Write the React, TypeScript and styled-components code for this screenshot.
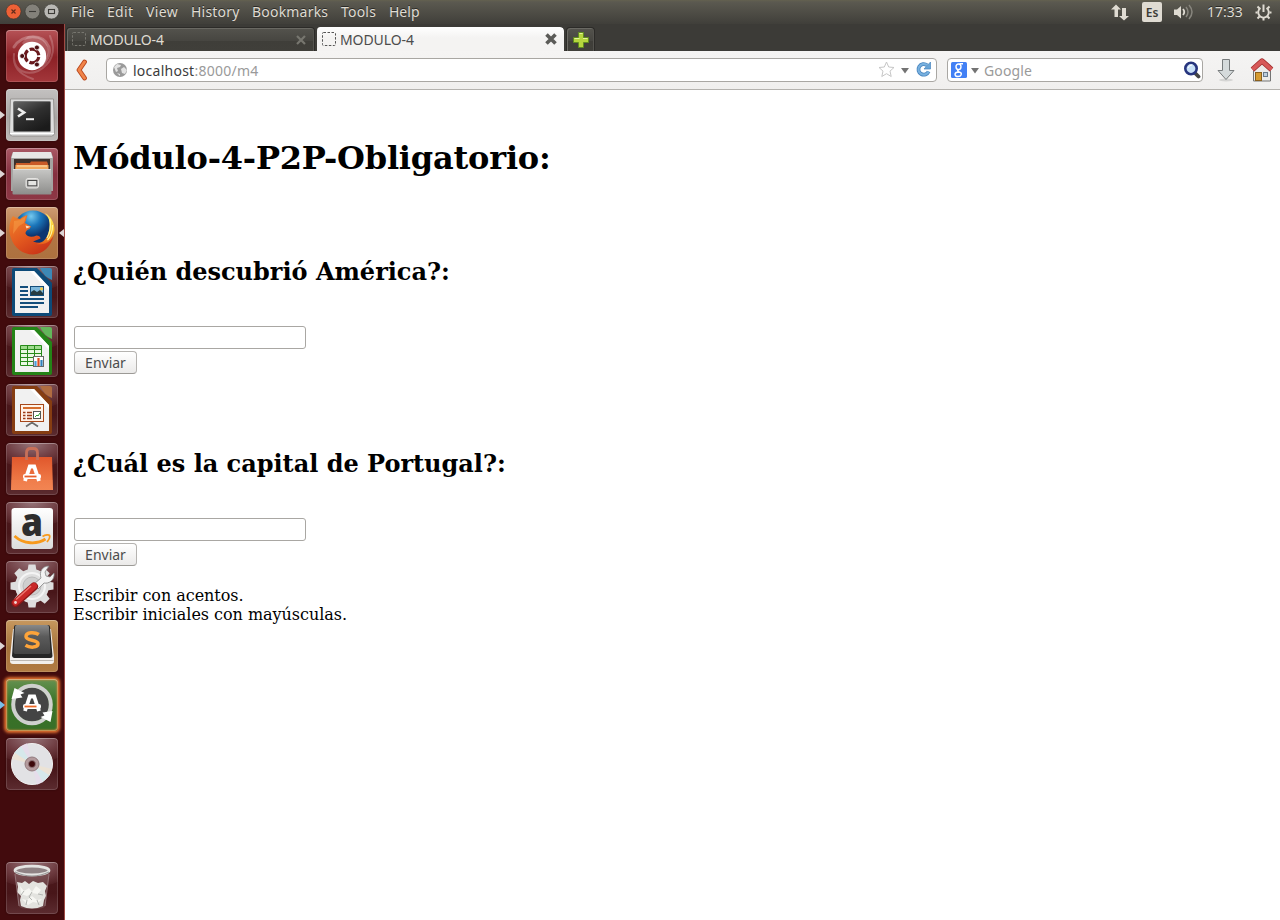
import React from 'react';
import styled, { createGlobalStyle } from 'styled-components';

const UI = '"Noto Sans", "Open Sans", sans-serif';

const Global = createGlobalStyle`
  * { box-sizing: border-box; }
  body { margin: 0; background: #fff; overflow: hidden; }
`;

const Desktop = styled.div`
  width: 1280px;
  height: 920px;
  display: flex;
  flex-direction: column;
  overflow: hidden;
`;

/* ---------- top panel ---------- */
const Panel = styled.header`
  height: 24px;
  flex: none;
  display: flex;
  align-items: center;
  justify-content: space-between;
  padding: 0 8px 0 5px;
  background: linear-gradient(#64614f 0, #5b5950 2px, #403f3a 100%);
  color: #dfdbd2;
  font: 14px/24px ${UI};
  text-shadow: 0 -1px 0 #2b2a27;
`;
const Group = styled.div`
  display: flex;
  align-items: center;
`;
const MenuItem = styled.span<{ $w: number; $ls?: number }>`
  width: ${p => p.$w}px;
  white-space: nowrap;
  letter-spacing: ${p => p.$ls ?? 0}px;
`;
const WindowButtons = styled.svg`
  width: 56px;
  height: 18px;
  margin-right: 10px;
`;
const Language = styled.span`
  width: 20px;
  height: 20px;
  margin: 0 12px 0 13px;
  border-radius: 2px;
  background: #dfdbd2;
  color: #3c3b37;
  font: 600 12px/21px ${UI};
  text-align: center;
  text-shadow: none;
`;
const Clock = styled.span`
  width: 37px;
  margin: 0 11px 0 12px;
`;

const Main = styled.div`
  flex: 1;
  display: flex;
  min-height: 0;
`;

/* ---------- launcher ---------- */
const Launcher = styled.nav`
  width: 65px;
  flex: none;
  display: flex;
  flex-direction: column;
  gap: 7px;
  padding: 6px 0 6px 6px;
  background: linear-gradient(#33090a 0, #420b0d 12px, #420b0d 100%);
  border-right: 1px solid #a04a44;
`;
const Tile = styled.div<{ $bg: string; $glow?: boolean }>`
  position: relative;
  width: 52px;
  height: 52px;
  flex: none;
  border-radius: 4px;
  background: ${p => p.$bg};
  box-shadow: inset 0 0 0 1px rgba(255, 255, 255, 0.14), inset 0 1px 0 rgba(255, 255, 255, 0.22),
    ${p => (p.$glow ? '0 0 3px 1.5px #e0702f, inset 0 0 2px 1px #e58a3c' : '0 0 2px rgba(0,0,0,0.4)')};
  &:last-child { margin-top: auto; }
`;
const Art = styled.svg`
  display: block;
  width: 52px;
  height: 52px;
  overflow: visible;
`;
const Pip = styled.i<{ $right?: boolean; $color?: string }>`
  position: absolute;
  top: 21.5px;
  ${p => (p.$right ? 'right: -6px;' : 'left: -6px;')}
  border: solid transparent;
  border-width: 4px 0;
  ${p => (p.$right ? 'border-right' : 'border-left')}: 5px solid ${p => p.$color ?? '#ddd5d5'};
`;

/* ---------- browser ---------- */
const Browser = styled.section`
  flex: 1;
  display: flex;
  flex-direction: column;
  min-width: 0;
`;
const TabStrip = styled.div`
  height: 27px;
  flex: none;
  display: flex;
  align-items: flex-end;
  gap: 1px;
  padding: 0 1px;
  background: #3c3b37;
`;
const Tab = styled.div<{ $active?: boolean }>`
  width: ${p => (p.$active ? 248 : 249)}px;
  height: 24px;
  display: flex;
  align-items: center;
  padding: 0 6px 0 5px;
  border-radius: 4px 4px 0 0;
  background: ${p => (p.$active ? 'linear-gradient(#fff, #f4f3f2 45%)' : 'linear-gradient(#54534d, #474641 55%, #3f3e39 56%, #403f3a)')};
  border: 1px solid ${p => (p.$active ? 'transparent' : '#2c2b28')};
  border-width: ${p => (p.$active ? '0 0 0 1px' : '1px 1px 0')};
  background-clip: ${p => (p.$active ? 'padding-box' : 'border-box')};
  box-shadow: ${p => (p.$active ? 'none' : 'inset 1px 1px 0 #6a6963, inset -1px 0 0 #55544f')};
  color: ${p => (p.$active ? '#4c4c4c' : '#dfdbd2')};
  font: 14px/24px ${UI};
`;
const TabLabel = styled.span`
  flex: 1;
  margin-left: 3px;
  padding-top: 1px;
  letter-spacing: -0.1px;
`;
const NewTab = styled(Tab)`
  width: 29px;
  margin-left: 1px;
  padding: 0;
  justify-content: center;
`;
const NavBar = styled.div`
  height: 39px;
  flex: none;
  display: flex;
  align-items: center;
  padding: 0 6px 1px 10px;
  background: linear-gradient(#f5f4f3, #f0efee);
  border-bottom: 1px solid #b4b2ae;
`;
const Field = styled.div<{ $w: number; $ml: number }>`
  width: ${p => p.$w}px;
  height: 24px;
  margin-left: ${p => p.$ml}px;
  display: flex;
  align-items: center;
  padding: 0 4px 0 5px;
  border: 1px solid #a9a7a3;
  border-radius: 4px;
  background: #fff;
  color: #9a9a9a;
  font: 14px/22px ${UI};
`;
const SearchField = styled(Field)`
  padding: 0 1px 0 3px;
`;
const FieldText = styled.span<{ $ls: number }>`
  flex: 1;
  margin-left: 5px;
  padding-top: 2px;
  letter-spacing: ${p => p.$ls}px;
  b { font-weight: 400; color: #3c3c3c; }
`;
const Icon = styled.svg<{ $ml?: number }>`
  flex: none;
  margin-left: ${p => p.$ml ?? 0}px;
`;

/* ---------- page ---------- */
const Page = styled.main`
  flex: 1;
  padding: 50px 8px 0;
  background: #fff;
  color: #000;
  font: 16px/19px "DejaVu Serif", serif;
`;
const Title = styled.h1`
  margin: 0 0 81px;
  font-size: 32px;
  line-height: 37px;
  letter-spacing: -0.2px;
`;
const Question = styled.form`
  height: 192px;
  display: flex;
  flex-direction: column;
  align-items: flex-start;
  padding-left: 1px;
`;
const Prompt = styled.h2`
  margin: 0 0 40px -1px;
  font-size: 24px;
  line-height: 28px;
  letter-spacing: -0.015px;
`;
const Answer = styled.input`
  width: 232px;
  height: 23px;
  margin: 0 0 2px;
  border: 1px solid #a9a7a3;
  border-radius: 3px;
  background: #fff;
  outline: none;
`;
const Send = styled.button`
  width: 63px;
  height: 23px;
  padding: 0;
  border: 1px solid #b5b3b0;
  border-bottom-color: #9c9a96;
  border-radius: 4px;
  background: linear-gradient(#fff, #ebeae9);
  color: #4c4c4c;
  font: 14px/20px ${UI};
`;
const Notes = styled.p`
  margin: -56px 0 0;
  letter-spacing: -0.035px;
`;

const DocPage = ({ dark, light, children }: { dark: string; light: string; children: React.ReactNode }) => (
  <Art viewBox="0 0 52 52">
    <path d="M8 2h23l15 15v31q0 2-2 2H8q-2 0-2-2V4q0-2 2-2z" fill={dark} />
    <path d="M34 2h10q2 0 2 2v10q-8-3-12-12z" fill={light} />
    <path d="M9 5h19l15 16v26H9z" fill="#f1f1f1" />
    <path d="M28 5l15 16v4L24 5z" fill="#fff" />
    {children}
  </Art>
);

const glass = 'radial-gradient(ellipse 44px 25px at 50% 0, #97757a 0, #6f3d42 60%, rgba(90, 40, 44, 0.5) 98%, transparent 100%), linear-gradient(#4d1a1e, #481619 60%, #5c2c30)';

const LetterA = ({ bar }: { bar: string }) => (
  <g>
    <path d="M19 38l4.800-14.500h4.400L33 38" fill="none" stroke="#fff" strokeWidth="3.800" />
    <rect x="17" y="31" width="18" height="5" rx="2" fill="#fff" />
    <path d="M18.500 33.500h12" stroke={bar} strokeWidth="1.800" />
  </g>
);

const gearTeeth = [0, 45, 90, 135, 180, 225, 270, 315];

const Dock = () => (
  <Launcher>
    <Tile $bg="linear-gradient(#b65357, #8c2025 52%, #a3373b)">
      <Art viewBox="0 0 52 52">
        <g fill="none" stroke="#fff" strokeLinecap="round">
          <path d="M8 17C16 4 37 3 43 17c2 8-3 15-7 18" opacity=".25" strokeWidth="3" />
          <path d="M8 24c-2 14 7 21 19 25M44 6c7 16 1 28-12 35-12 5-23-1-24-12" opacity=".2" strokeWidth="2" />
        </g>
        <path d="M22 6c17-3 28 14 14 31L16 13z" fill="#fff" opacity=".18" />
        <circle cx="26" cy="26" r="14.200" fill="#fff" />
        <circle cx="26" cy="26" r="6.800" fill="none" stroke="#6a191d" strokeWidth="3.200" strokeDasharray="12.200 2.040" strokeDashoffset="-1" />
        <g fill="#4c1013" stroke="#fff" strokeWidth=".8">
          <circle cx="16.200" cy="26" r="2.500" /><circle cx="30.900" cy="17.500" r="2.500" /><circle cx="30.900" cy="34.500" r="2.500" />
        </g>
      </Art>
    </Tile>
    <Tile $bg="linear-gradient(#c3c1c0, #a9a6a4 55%, #bcb9b7)">
      <Pip />
      <Art viewBox="0 0 52 52">
        <defs><linearGradient id="screen" x2=".6" y2="1"><stop stopColor="#666" /><stop offset=".5" stopColor="#303030" /><stop offset="1" stopColor="#1b1b1b" /></linearGradient></defs>
        <path d="M4.500 10h43l1 34q0 3-3 3h-39q-3 0-3-3z" fill="#dedede" stroke="#8b8987" strokeWidth=".8" />
        <path d="M4 44.500h44" stroke="#fff" />
        <rect x="7.500" y="12.500" width="37" height="30" rx="1" fill="url(#screen)" stroke="#777" />
        <path d="M12 19.500l6 4-6 4" fill="none" stroke="#eee" strokeWidth="2.700" />
        <path d="M20 30.200h8" stroke="#eee" strokeWidth="2" />
      </Art>
    </Tile>
    <Tile $bg="linear-gradient(#aa5965, #85303f 50%, #8e3745)">
      <Pip />
      <Art viewBox="0 0 52 52">
        <defs><linearGradient id="drawer" x2="0" y2="1"><stop stopColor="#c6c6c4" /><stop offset="1" stopColor="#8d8d8b" /></linearGradient></defs>
        <path d="M7 4h38l2 5v34H5V9z" fill="#a5a4a2" />
        <path d="M7 4h38l1.500 6h-41z" fill="#e8e7e6" />
        <rect x="8" y="11" width="36" height="10" fill="#3d302c" />
        <path d="M10 15h14l1-1.500h16l1 2.500v6H9z" fill="#c95a27" />
        <path d="M9.500 17h33v5h-33z" fill="#f2a85d" /><path d="M11 18h30" stroke="#ffe1b2" />
        <path d="M7 21.500h38l.5 24q0 1-1 1h-37q-1 0-1-1z" fill="url(#drawer)" />
        <path d="M7 21.500h38" stroke="#ddd" />
        <rect x="20" y="30.500" width="12.500" height="9.500" rx="2" fill="#c9c8c6" stroke="#e5e4e2" />
        <rect x="21.800" y="32.500" width="9" height="5.300" fill="#e4e4e2" stroke="#484848" />
      </Art>
    </Tile>
    <Tile $bg="linear-gradient(#cf9b72, #b27645 50%, #ad713f)">
      <Pip /><Pip $right />
      <Art viewBox="0 0 52 52">
        <defs>
          <radialGradient id="globe" cx=".45" cy=".15"><stop stopColor="#75c9ef" /><stop offset=".5" stopColor="#1b76ba" /><stop offset="1" stopColor="#0c3671" /></radialGradient>
          <linearGradient id="fox" x1="0" x2=".7" y2="1"><stop stopColor="#f0852d" /><stop offset=".55" stopColor="#e2581f" /><stop offset="1" stopColor="#c93418" /></linearGradient>
          <linearGradient id="tail" x2="0" y2="1"><stop stopColor="#fff36b" /><stop offset=".55" stopColor="#fbc32a" /><stop offset="1" stopColor="#e75b1c" /></linearGradient>
        </defs>
        <circle cx="27" cy="23" r="19.500" fill="url(#globe)" />
        <path d="M7 9C2 16 3 26 5 31c3 10 12 16.500 22 16.500C38 47 45 39 47.500 29 42 36 34 37 27 34.500l7.500-3c0-2-2-3-4-3-4 2-9 2-11-2 0-2 1-3.500 4-4.500l1.500-2.500L19 16l2.500-8c-3.500 1-5.500 2-7.500 4-2-1-5-1-7-3z" fill="url(#fox)" />
        <path d="M39 6c5 5 6 13 3 21-2 6-6 9-12 10 11 2 18-5 18.500-14 .2-7-4-14-9.500-17z" fill="url(#tail)" />
        <path d="M44 12c1 7 0 14-3 19M46.500 18c0 6-1 11-5 15" stroke="#fff59a" fill="none" strokeWidth="1.200" />
        <path d="M8 14l6-1 6-4-2 7-5 3-6 8z" fill="#f7a24a" opacity=".5" />
        <path d="M19.500 18.500l5 1.200-4 1.800z" fill="#ffdfba" />
      </Art>
    </Tile>
    <Tile $bg={glass}>
      <DocPage dark="#0d4a78" light="#3d88b6">
        <g stroke="#144e7b" strokeWidth="2"><path d="M14 21h8M14 25h8M14 29h8M14 33h24M14 37h24M14 41h18" /></g>
        <rect x="24.500" y="20.500" width="13" height="9" fill="#7fb9dc" stroke="#144e7b" />
        <circle cx="35.500" cy="22.800" r="1.600" fill="#f5cb47" /><path d="M25 29v-3l3-2 3 2 3-2 3 3v2z" fill="#263c42" />
      </DocPage>
    </Tile>
    <Tile $bg={glass}>
      <DocPage dark="#248417" light="#63b65a">
        <rect x="14.500" y="20.500" width="21" height="20" fill="#eaf8e4" />
        <rect x="14.500" y="20.500" width="21" height="4" fill="#9edb8d" />
        <path d="M14.500 20.500h21v20h-21zM14.500 24.500h21M14.500 28.500h21M14.500 32.500h21M14.500 36.500h21M21.500 20.500v20M28.500 20.500v20" fill="none" stroke="#278a1a" />
        <rect x="27.500" y="31.500" width="10" height="10" fill="#fff" stroke="#686868" />
        <path d="M29.500 41v-5" stroke="#4b9ed8" strokeWidth="2.200" /><path d="M32.500 41v-8" stroke="#dc4e21" strokeWidth="2.200" /><path d="M35.500 41v-6" stroke="#3181bd" strokeWidth="2.200" />
      </DocPage>
    </Tile>
    <Tile $bg={glass}>
      <DocPage dark="#863d12" light="#b06c41">
        <path d="M26 38v2M20 42.500l6-4 6 4" stroke="#6b6b6b" strokeWidth="1.700" fill="none" />
        <rect x="14.500" y="20.500" width="23" height="17" fill="#fff2e7" stroke="#a7481a" />
        <path d="M17 24h18" stroke="#d56d2d" strokeWidth="2" />
        <path d="M17 28.500h2.500M17 31.500h2.500M17 34.500h2.500M21 28.500h5M21 31.500h5M21 34.500h5" stroke="#9c3b14" strokeWidth="1.700" />
        <rect x="27.500" y="27.500" width="7" height="7" fill="#fff" stroke="#555" /><path d="M29 33l2-2 1 1 2-3" fill="none" stroke="#2b9a30" />
      </DocPage>
    </Tile>
    <Tile $bg={glass}>
      <Art viewBox="0 0 52 52">
        <defs><linearGradient id="bag" x2="0" y2="1"><stop stopColor="#e0572c" /><stop offset=".6" stopColor="#ed7442" /><stop offset="1" stopColor="#f0814f" /></linearGradient></defs>
        <path d="M6 14h40l1 33H5z" fill="url(#bag)" />
        <path d="M5 37h42v10H5z" fill="#fa9566" opacity=".2" />
        <path d="M20.500 17v-7q0-4.500 4-4.500h3q4 0 4 4.500v7" fill="none" stroke="#c77059" strokeWidth="2.800" />
        <LetterA bar="#e75f2c" />
      </Art>
    </Tile>
    <Tile $bg={glass}>
      <Art viewBox="0 0 52 52">
        <defs><linearGradient id="card" x2="0" y2="1"><stop stopColor="#fff" /><stop offset="1" stopColor="#dcdcdc" /></linearGradient></defs>
        <rect x="5.500" y="6" width="41.500" height="41" rx="3" fill="url(#card)" />
        <text x="15" y="34" textLength="22" lengthAdjust="spacingAndGlyphs" fontFamily="Open Sans, sans-serif" fontWeight="800" fontSize="39" fill="#2d2d2d">a</text>
        <path d="M8.500 34c9 8.500 23 8.500 31 3" stroke="#f79a1d" strokeWidth="2.800" fill="none" />
        <path d="M36.500 34.500c3-2 6.500-2 7-1s-.5 4-2.500 6.500" stroke="#f79a1d" strokeWidth="1.800" fill="none" />
      </Art>
    </Tile>
    <Tile $bg={glass}>
      <Art viewBox="0 0 52 52">
        <g fill="#dedede">
          {gearTeeth.map(a => <path key={a} d="M21.500 10l1-6.500h7l1 6.500z" transform={`rotate(${a} 26 25)`} />)}
          <circle cx="26" cy="25" r="17" />
        </g>
        <circle cx="26" cy="25" r="13" fill="none" stroke="#f4f4f4" strokeWidth="2" />
        <circle cx="26" cy="25" r="9" fill="#cfcfcf" stroke="#bbb" />
        <path d="M28 23l7-6c-2-6 1-12 8-12l-4 6 1 4 4 1 4-4c1 7-5 11-10 10l-6 6z" fill="#f2f2f2" stroke="#878787" strokeWidth=".8" />
        <path d="M9.500 42L28 25.500" stroke="#8d1717" strokeWidth="8" strokeLinecap="round" />
        <path d="M9.500 41.500L28 25" stroke="#c92929" strokeWidth="6" strokeLinecap="round" />
        <path d="M10 38.500l15-13.500" stroke="#ee7770" strokeWidth="1.500" /><circle cx="9.500" cy="41.500" r="1.400" fill="#f2d8d6" />
      </Art>
    </Tile>
    <Tile $bg="linear-gradient(#c7985f, #a5723a 55%, #b17b43)">
      <Pip />
      <Art viewBox="0 0 52 52">
        <defs><linearGradient id="key" x2="0" y2="1"><stop stopColor="#898989" /><stop offset=".4" stopColor="#5b5b5b" /><stop offset="1" stopColor="#444" /></linearGradient></defs>
        <path d="M7 9h38l3 28v4q0 3-3 3H7q-3 0-3-3v-4z" fill="#f2efec" />
        <path d="M4.500 40.500h43" stroke="#bdb8b3" />
        <path d="M6 36L8 7q0-2 2-2h32q2 0 2 2l2.500 29q0 2-2 2h-36q-2 0-2.500-2z" fill="#252525" />
        <path d="M9 7q0-2 2-2h30q2 0 2 2l1.500 25q0 2-2 2h-33q-2 0-2-2z" fill="url(#key)" />
        <path d="M32.800 14.500c-4-2.800-12.800-2.500-12.800 2 0 4.500 12 3 12 7.300s-8.500 4-12.500 1.500" fill="none" stroke="#fda43a" strokeWidth="3.500" />
      </Art>
    </Tile>
    <Tile $bg="linear-gradient(#669251, #397328 45%, #386f28)" $glow>
      <Pip $color="#79bfeb" />
      <Art viewBox="0 0 52 52">
        <circle cx="26" cy="25.500" r="17" fill="#444" />
        <circle cx="26" cy="25.500" r="18.800" fill="none" stroke="#cfd0ce" strokeWidth="4" />
        <path d="M5.500 20l3-11 10 5-4 1.500 2 3zM46.500 32l-2 11-10-5 4-1.500-2-3z" fill="#fff" />
        <g transform="translate(0 -6)"><LetterA bar="#ed6926" /></g>
      </Art>
    </Tile>
    <Tile $bg={glass}>
      <Art viewBox="0 0 52 52">
        <circle cx="26" cy="26" r="20.500" fill="#e2e2e5" stroke="#f2f2f2" />
        <g opacity=".55">
          <path d="M26 26L8 15l7-7zM26 26l18 11-8 8z" fill="#cdeef0" /><path d="M26 26L15 8l6-3zM26 26l11 18-6 3z" fill="#eadaf1" /><path d="M26 26L6 21l3-6zM26 26l20 5-3 6z" fill="#f5e5cb" />
        </g>
        <circle cx="26" cy="26" r="7" fill="#b49a9d" stroke="#927b7e" /><circle cx="26" cy="26" r="3.500" fill="#3e080b" stroke="#927b7e" strokeWidth=".8" />
      </Art>
    </Tile>
    <Tile $bg={glass}>
      <Art viewBox="0 0 52 52">
        <path d="M9 9l4 35q0 3 13 3t13-3l4-35z" fill="#866569" opacity=".45" />
        <path d="M11 20l5 1 3-2 4 3 4-3 5 2 5-1 4 4-2 5 1 5-2 4-1 6q-11 5-22 0l-1-6 1-4-4-4 1-5z" fill="#e3e3df" />
        <path d="M14 24l4 5 5-3 3 4 4-6 5 4-3 4-6-1-5 3-6-2zM16 37l5 1 5-4 5 4 5-1-4 4-5-1-5 3z" fill="#f6f6f2" />
        <path d="M18 29l-3 4M26 30l-3 5 3 3M32 32l5 1M21 38l-1 5M31 38l2 5" stroke="#b3b5b1" fill="none" />
        <path d="M9 12l4 32M43 12l-4 32" stroke="#a08488" strokeWidth=".8" />
        <ellipse cx="26" cy="8.500" rx="17" ry="4.300" fill="#8f8284" stroke="#e4e4e2" strokeWidth="2.800" />
        <path d="M9 10q17 8 34 0" fill="none" stroke="#999" strokeWidth="1.200" />
      </Art>
    </Tile>
  </Launcher>
);

const Cross = () => (
  <Icon width="14" height="14" viewBox="0 0 14 14"><path d="M2.500 2.500l9 9M11.500 2.500l-9 9" stroke="#5b5b58" strokeWidth="3.600" /></Icon>
);
const Favicon = ({ color }: { color: string }) => (
  <Icon width="15" height="15"><rect x=".5" y=".5" width="13" height="13" rx="1" fill="none" stroke={color} strokeDasharray="2.500 1.500" /></Icon>
);
const Arrow = ({ ml }: { ml: number }) => (
  <Icon $ml={ml} width="8" height="8"><path d="M0 2h8L4 7.500z" fill="#737373" /></Icon>
);

export default function App() {
  return (
    <Desktop>
      <Global />
      <Panel>
        <Group>
          <WindowButtons viewBox="0 0 56 18">
            <circle cx="8.500" cy="8.500" r="7.500" fill="#ed6136" stroke="#40332c" strokeWidth=".6" /><path d="M6.500 6.500l4 4M10.500 6.500l-4 4" stroke="#632c1a" strokeWidth="1.200" />
            <circle cx="27.500" cy="8.500" r="7.500" fill="#83817a" stroke="#383733" strokeWidth=".6" /><path d="M24 8.500h7" stroke="#3c3b37" strokeWidth="1.100" />
            <circle cx="46.500" cy="8.500" r="7.500" fill="#b9b8b4" stroke="#383733" strokeWidth=".6" /><rect x="43.500" y="6.500" width="6" height="4" fill="none" stroke="#3c3b37" strokeWidth="1.100" />
          </WindowButtons>
          <MenuItem $w={36} $ls={0.3}>File</MenuItem>
          <MenuItem $w={39} $ls={0.3}>Edit</MenuItem>
          <MenuItem $w={45} $ls={0.4}>View</MenuItem>
          <MenuItem $w={61} $ls={0.2}>History</MenuItem>
          <MenuItem $w={89} $ls={0.2}>Bookmarks</MenuItem>
          <MenuItem $w={48} $ls={0.2}>Tools</MenuItem>
          <MenuItem $w={36}>Help</MenuItem>
        </Group>
        <Group>
          <Icon width="18" height="18" fill="#dfdbd2"><path d="M3.500 14V6.500H0l5-5 5 5H7V14zM11 5v8H8l5 4.500 5-4.500h-3V5z" /></Icon>
          <Language>Es</Language>
          <Icon width="21" height="18" viewBox="0 0 21 18"><path d="M0 6.500h3l4-3.500v12.500l-4-3.500H0z" fill="#dfdbd2" /><path d="M9 6q2.500 3 0 6" fill="none" stroke="#dfdbd2" strokeWidth="1.800" /><path d="M12 4q4 5 0 10M15 2q6 7 0 14" fill="none" stroke="#87857d" strokeWidth="1.500" /></Icon>
          <Clock>17:33</Clock>
          <Icon width="17" height="17" viewBox="0 0 17 17" fill="none" stroke="#dfdbd2">
            <path d="M5.500 4a5.300 5.300 0 1 0 6 0" strokeWidth="1.900" /><path d="M8.500 .5v7.500" strokeWidth="2" />
            <path d="M2.500 2.500l2 2M14.500 2.500l-2 2M.5 8.500h2M14.500 8.500h2M2.500 14.500l2-2M14.500 14.500l-2-2M8.500 14v2.500" strokeWidth="2" />
          </Icon>
        </Group>
      </Panel>
      <Main>
        <Dock />
        <Browser>
          <TabStrip>
            <Tab><Favicon color="#77766f" /><TabLabel>MODULO-4</TabLabel><Icon width="13" height="12"><path d="M2 2l8 8M10 2l-8 8" stroke="#77766f" strokeWidth="2.200" /></Icon></Tab>
            <Tab $active><Favicon color="#555" /><TabLabel>MODULO-4</TabLabel><Cross /></Tab>
            <NewTab><Icon width="18" height="18"><path d="M6.500 1.500h5v5h5v5h-5v5h-5v-5h-5v-5h5z" fill="#b5d53e" stroke="#608c20" /><path d="M7.500 2.500h3M2.500 7.500h5M11 7.500h4.500" stroke="#e5f49a" /></Icon></NewTab>
          </TabStrip>
          <NavBar>
            <Icon width="14" height="22" viewBox="0 0 14 22"><path d="M9.500 3L4 11l5.500 8" fill="none" stroke="#b9471d" strokeWidth="4.800" strokeLinecap="round" strokeLinejoin="round" /><path d="M9.500 3L4 11l5.500 8" fill="none" stroke="#f18449" strokeWidth="3" strokeLinecap="round" strokeLinejoin="round" /></Icon>
            <Field $w={831} $ml={17}>
              <Icon width="16" height="16" viewBox="0 0 16 16"><circle cx="8" cy="8" r="7" fill="#9a9a9a" /><path d="M2 5l3-3 4 1-1 2-3 1 1 3-2 1zM9 7l3-2 3 3-2 4-3-1zM5 11l3 1v2z" fill="#e3e3e3" /></Icon>
              <FieldText $ls={0.25}><b>localhost</b>:8000/m4</FieldText>
              <Icon width="17" height="17" viewBox="0 0 17 17"><path d="M8.500 1l2.200 5 5.300.5-4 3.600 1.200 5.400-4.700-2.800-4.700 2.800L5 10.100 1 6.500 6.300 6z" fill="#fff" stroke="#c6c6c6" /></Icon>
              <Arrow ml={6} />
              <Icon $ml={6} width="17" height="17" viewBox="0 0 17 17"><path d="M12 4.200a5.300 5.300 0 1 0 1.600 6.300" fill="none" stroke="#4985bf" strokeWidth="3.800" /><path d="M12 4.200a5.300 5.300 0 1 0 1.600 6.300" fill="none" stroke="#78b1df" strokeWidth="2.200" /><path d="M15.500 1v7H9z" fill="#68a5d7" stroke="#4985bf" strokeWidth=".7" /></Icon>
            </Field>
            <SearchField $w={256} $ml={10}>
              <Icon width="16" height="16"><rect width="16" height="16" rx="1.500" fill="#4280f5" /><g fill="none" stroke="#fff" strokeWidth="1.400"><ellipse cx="7.500" cy="4.800" rx="2.500" ry="2.800" /><path d="M8.500 1.800h3.500M8 7.500c-2.500 1-1 2 .7 2.700 2.700 1 1.800 4.300-1.700 4.300-3.700 0-4-3.700-.5-4.200h2" /></g></Icon>
              <Arrow ml={4} />
              <FieldText $ls={0.15}>Google</FieldText>
              <Icon width="18" height="18" viewBox="0 0 18 18"><path d="M12 12l3.500 3.500" stroke="#444" strokeWidth="3.800" strokeLinecap="round" /><circle cx="8" cy="7.500" r="5.700" fill="#c9e1f8" stroke="#27357e" strokeWidth="2.600" /><path d="M5 7q1-3 4-3" stroke="#fff" fill="none" /></Icon>
            </SearchField>
            <Icon $ml={13} width="20" height="24" viewBox="0 0 20 24"><ellipse cx="10" cy="22" rx="7" ry="1.500" fill="#d5d5d4" /><path d="M6.500 1.500h7v11h4.500L10 21.500 2 12.500h4.500z" fill="#d5dadb" stroke="#777b7c" strokeLinejoin="round" /></Icon>
            <Icon $ml={14} width="24" height="24" viewBox="0 0 24 24"><path d="M3.500 11v12h17V11L12 4z" fill="#ecebea" stroke="#747474" /><rect x="5.500" y="14.500" width="6" height="8" fill="#d69b31" stroke="#8b601d" /><rect x="13.500" y="14.500" width="4" height="4" fill="#bdcddd" stroke="#68798b" /><path d="M2.500 11.500L12 3l9.500 8.500" fill="none" stroke="#9f2c2c" strokeWidth="5.400" strokeLinejoin="round" /><path d="M2.500 11.500L12 3l9.500 8.500" fill="none" stroke="#d75858" strokeWidth="3.800" strokeLinejoin="round" /></Icon>
          </NavBar>
          <Page>
            <Title>Módulo-4-P2P-Obligatorio:</Title>
            <Question><Prompt>¿Quién descubrió América?:</Prompt><Answer /><Send type="button">Enviar</Send></Question>
            <Question><Prompt>¿Cuál es la capital de Portugal?:</Prompt><Answer /><Send type="button">Enviar</Send></Question>
            <Notes>Escribir con acentos.<br />Escribir iniciales con mayúsculas.</Notes>
          </Page>
        </Browser>
      </Main>
    </Desktop>
  );
}
